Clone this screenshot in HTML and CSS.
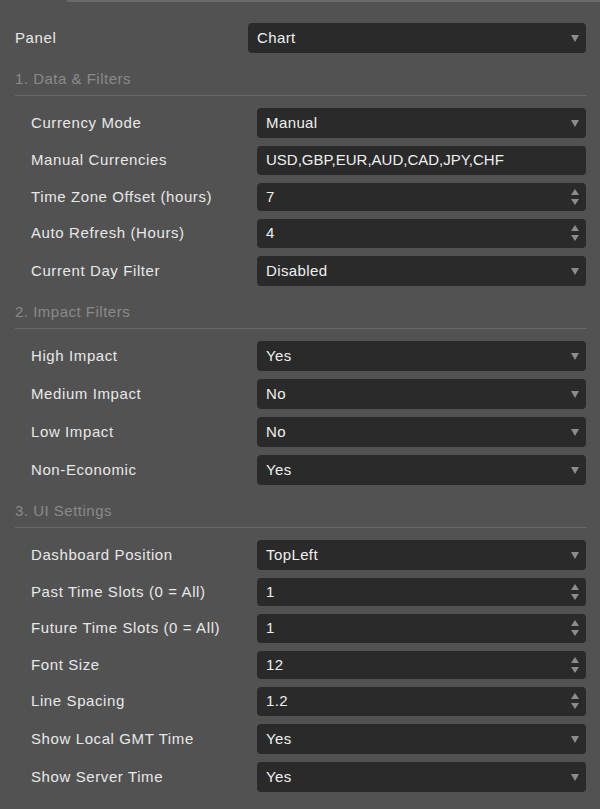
FILE: index.html
```html
<!DOCTYPE html>
<html lang="en">
<head>
    <meta charset="UTF-8">
    <meta name="viewport" content="width=device-width, initial-scale=1.0">
    <title>Indicator Inputs</title>
    <link rel="stylesheet" href="styles.css">
</head>
<body>

    <div class="tab-line"></div>

    <div class="panel-row">
        <div class="label">Panel</div>
        <div class="field select"><span class="value">Chart</span><span class="arrow"></span></div>
    </div>

    <!-- 1. Data & Filters -->
    <div class="section-title">1. Data &amp; Filters</div>
    <div class="rows">
        <div class="row">
            <div class="label">Currency Mode</div>
            <div class="field select"><span class="value">Manual</span><span class="arrow"></span></div>
        </div>
        <div class="row">
            <div class="label">Manual Currencies</div>
            <div class="field text"><span class="value">USD,GBP,EUR,AUD,CAD,JPY,CHF</span></div>
        </div>
        <div class="row">
            <div class="label">Time Zone Offset (hours)</div>
            <div class="field spin"><span class="value">7</span><span class="spinner"><i class="up"></i><i class="down"></i></span></div>
        </div>
        <div class="row">
            <div class="label">Auto Refresh (Hours)</div>
            <div class="field spin"><span class="value">4</span><span class="spinner"><i class="up"></i><i class="down"></i></span></div>
        </div>
        <div class="row">
            <div class="label">Current Day Filter</div>
            <div class="field select"><span class="value">Disabled</span><span class="arrow"></span></div>
        </div>
    </div>

    <!-- 2. Impact Filters -->
    <div class="section-title">2. Impact Filters</div>
    <div class="rows">
        <div class="row">
            <div class="label">High Impact</div>
            <div class="field select"><span class="value">Yes</span><span class="arrow"></span></div>
        </div>
        <div class="row">
            <div class="label">Medium Impact</div>
            <div class="field select"><span class="value">No</span><span class="arrow"></span></div>
        </div>
        <div class="row">
            <div class="label">Low Impact</div>
            <div class="field select"><span class="value">No</span><span class="arrow"></span></div>
        </div>
        <div class="row">
            <div class="label">Non-Economic</div>
            <div class="field select"><span class="value">Yes</span><span class="arrow"></span></div>
        </div>
    </div>

    <!-- 3. UI Settings -->
    <div class="section-title">3. UI Settings</div>
    <div class="rows">
        <div class="row">
            <div class="label">Dashboard Position</div>
            <div class="field select"><span class="value">TopLeft</span><span class="arrow"></span></div>
        </div>
        <div class="row">
            <div class="label">Past Time Slots (0 = All)</div>
            <div class="field spin"><span class="value">1</span><span class="spinner"><i class="up"></i><i class="down"></i></span></div>
        </div>
        <div class="row">
            <div class="label">Future Time Slots (0 = All)</div>
            <div class="field spin"><span class="value">1</span><span class="spinner"><i class="up"></i><i class="down"></i></span></div>
        </div>
        <div class="row">
            <div class="label">Font Size</div>
            <div class="field spin"><span class="value">12</span><span class="spinner"><i class="up"></i><i class="down"></i></span></div>
        </div>
        <div class="row">
            <div class="label">Line Spacing</div>
            <div class="field spin"><span class="value">1.2</span><span class="spinner"><i class="up"></i><i class="down"></i></span></div>
        </div>
        <div class="row">
            <div class="label">Show Local GMT Time</div>
            <div class="field select"><span class="value">Yes</span><span class="arrow"></span></div>
        </div>
        <div class="row">
            <div class="label">Show Server Time</div>
            <div class="field select"><span class="value">Yes</span><span class="arrow"></span></div>
        </div>
    </div>

</body>
</html>
```

FILE: styles.css
```css
/* Basic Reset */
* {
    margin: 0;
    padding: 0;
    box-sizing: border-box;
}

body {
    font-family: 'Liberation Sans', Arial, sans-serif;
    font-size: 15px;
    background: #525252;
    color: #e8e8e8;
    padding: 0 14px 20px 15px;
}

/* Thin line left over from the tab strip above */
.tab-line {
    height: 2px;
    margin: 0 -14px 0 52px;
    background: #6a6a6a;
}

.label {
    letter-spacing: 0.6px;
    line-height: 18px;
}

/* Top "Panel" row */
.panel-row {
    display: grid;
    grid-template-columns: 233px 1fr;
    align-items: center;
    margin-top: 21px;
}

/* Section headers */
.section-title {
    color: #8a8a8a;
    letter-spacing: 0.5px;
    line-height: 18px;
    padding: 17px 0 7px;
    border-bottom: 1px solid #6a6a6a;
    margin-bottom: 12px;
}

.rows {
    display: flex;
    flex-direction: column;
    gap: 8px;
}

.row {
    display: grid;
    grid-template-columns: 242px 1fr;
    align-items: center;
}

.row .label {
    padding-left: 16px;
}

/* Input controls */
.field {
    display: flex;
    align-items: center;
    background: #2a2a2a;
    border-radius: 4px;
    padding: 0 7px 0 9px;
    color: #f0f0f0;
}

.field .value {
    flex: 1;
    line-height: 18px;
}

.field.select {
    height: 30px;
}

.field.select .value {
    letter-spacing: 0.4px;
}

.field.text,
.field.spin {
    height: 28.5px;
}

.field.spin .value {
    letter-spacing: 0.4px;
}

.arrow {
    width: 0;
    height: 0;
    border-left: 4px solid transparent;
    border-right: 4px solid transparent;
    border-top: 7px solid #8c8c8c;
    margin-top: 1px;
}

.spinner {
    display: flex;
    flex-direction: column;
    gap: 4px;
}

.spinner i {
    display: block;
    width: 0;
    height: 0;
    border-left: 4px solid transparent;
    border-right: 4px solid transparent;
}

.spinner .up {
    border-bottom: 6px solid #8c8c8c;
}

.spinner .down {
    border-top: 6px solid #8c8c8c;
}
```
